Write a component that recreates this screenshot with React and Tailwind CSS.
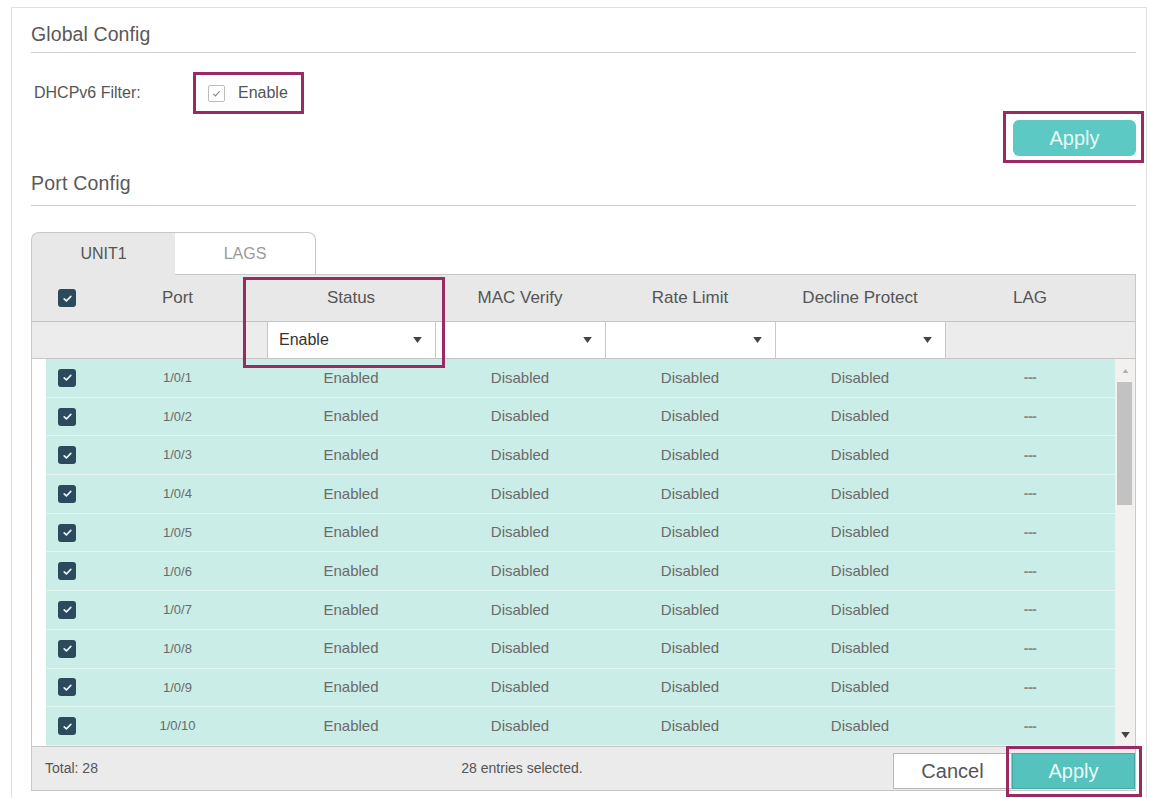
import React from 'react';

const ports = Array.from({ length: 10 }, (_, i) => `1/0/${i + 1}`);

// same column template for header, filter and body rows
const cols = 'grid grid-cols-[14px_42px_179px_168px_170px_170px_170px_170px_20px]';

const DarkCheck = () => (
  <span className="flex h-[18px] w-[18px] items-center justify-center rounded-[3px] bg-[#2c4a5c]">
    <svg viewBox="0 0 12 12" className="h-[11px] w-[11px]">
      <path d="M2.4 6.4l2.4 2.3 4.8-5.1" fill="none" stroke="#e4f3f8" strokeWidth="1.9" strokeLinecap="round" strokeLinejoin="round" />
    </svg>
  </span>
);

const Arrow = ({ className = '' }) => (
  <svg viewBox="0 0 10 7" className={`h-[6px] w-[9px] ${className}`}>
    <path d="M0 0h10L5 7z" fill="#444" />
  </svg>
);

const Select = ({ value }) => (
  <div className="flex h-full items-center justify-between border-l border-[#c8c8c8] bg-white pl-[11px] pr-[13px] text-[16px] text-[#333]">
    <span>{value}</span>
    <Arrow />
  </div>
);

const App = () => {
  return (
    <div className="h-[798px] w-[1151px] overflow-hidden bg-white pl-[11px] pt-[7px] font-['Liberation_Sans',Arial,sans-serif]">
      <div className="h-full w-[1136px] border-l border-r border-t border-[#e0e0e0]">
        <div className="ml-[19px] mr-[10px]">
          {/* Global Config */}
          <div className="pt-[15px] text-[19.5px] leading-[22px] tracking-[0.1px] text-[#595959]">Global Config</div>
          <div className="mt-[7px] border-b border-[#cfcfcf]" />

          <div className="mt-[19px] flex items-center">
            <div className="w-[162px] pl-[3px] text-[16px] text-[#555]">DHCPv6 Filter:</div>
            <div className="flex h-[42px] w-[111px] items-center border-[3px] border-[#9c2a62] pl-[12px]">
              <span className="flex h-[17px] w-[17px] items-center justify-center rounded-[2px] border border-[#bdbdbd] bg-white">
                <svg viewBox="0 0 12 12" className="h-[11px] w-[11px]">
                  <path d="M2.5 6.3l2.4 2.4 4.6-5.2" fill="none" stroke="#8a8a8a" strokeWidth="1.2" />
                </svg>
              </span>
              <span className="ml-[13px] text-[16px] text-[#555]">Enable</span>
            </div>
          </div>

          <div className="-mr-[8px] -mt-[3px] flex justify-end">
            <div className="h-[52px] w-[141px] border-[3px] border-[#9c2a62] pb-[4px] pl-[7px] pr-[5px] pt-[6px]">
              <button className="flex h-full w-full items-center justify-center rounded-[6px] bg-[#5dc9c4] text-[20px] text-[#e8faf9]">
                Apply
              </button>
            </div>
          </div>

          {/* Port Config */}
          <div className="mt-[9px] text-[19.5px] leading-[22px] tracking-[0.2px] text-[#595959]">Port Config</div>
          <div className="mt-[11px] border-b border-[#cfcfcf]" />

          <div className="mt-[26px] flex h-[43px] text-[16px]">
            <div className="flex w-[144px] items-center justify-center rounded-tl-[8px] border-l border-t border-[#c8c8c8] bg-[#e8e8e8] text-[#555]">
              UNIT1
            </div>
            <div className="flex w-[141px] items-center justify-center rounded-tr-[8px] border-b border-r border-t border-[#c8c8c8] bg-white text-[#9a9a9a]">
              LAGS
            </div>
            <div className="flex-1 border-b border-[#c8c8c8]" />
          </div>

          {/* table */}
          <div className="relative border-b border-l border-r border-[#c8c8c8]">
            <div className={`${cols} h-[47px] items-center border-b border-[#c4c4c4] bg-[#e8e8e8] text-[17px] text-[#555]`}>
              <span />
              <span className="flex justify-center">
                <DarkCheck />
              </span>
              <span className="text-center">Port</span>
              <span className="text-center">Status</span>
              <span className="text-center">MAC Verify</span>
              <span className="text-center">Rate Limit</span>
              <span className="text-center">Decline Protect</span>
              <span className="text-center">LAG</span>
              <span />
            </div>

            <div className={`${cols} h-[37px] border-b border-[#c4c4c4] bg-[#ececec]`}>
              <span className="col-span-3" />
              <Select value="Enable" />
              <Select value="" />
              <Select value="" />
              <Select value="" />
              <span className="col-span-2 border-l border-[#c8c8c8]" />
            </div>

            <div className="flex h-[387px] bg-white">
              <div className="flex-1 pl-[14px]">
                {ports.map((p) => (
                  <div
                    key={p}
                    className="grid h-[38.7px] grid-cols-[42px_179px_168px_170px_170px_170px_170px] items-center border-b border-[#e2f5f1] bg-[#cbede7] text-[15px] text-[#6a6a6a]"
                  >
                    <span className="flex justify-center">
                      <DarkCheck />
                    </span>
                    <span className="text-center text-[13px]">{p}</span>
                    <span className="text-center">Enabled</span>
                    <span className="text-center">Disabled</span>
                    <span className="text-center">Disabled</span>
                    <span className="text-center">Disabled</span>
                    <span className="text-center text-[14px] font-bold tracking-[-0.5px] text-[#8a8a8a]">---</span>
                  </div>
                ))}
              </div>
              {/* scrollbar */}
              <div className="flex w-[20px] flex-col bg-[#f3f0f0]">
                <div className="flex h-[23px] items-center justify-center">
                  <svg viewBox="0 0 10 7" className="h-[4px] w-[7px]">
                    <path d="M0 7h10L5 0z" fill="#b0b0b0" />
                  </svg>
                </div>
                <div className="ml-[2px] h-[123px] w-[15px] bg-[#c2c2c2]" />
                <div className="flex-1" />
                <div className="flex h-[14px] items-start justify-center">
                  <Arrow />
                </div>
              </div>
            </div>

            <div className="flex h-[44px] border-t border-[#c8c8c8] bg-[#ebebeb] text-[14px] text-[#555]">
              <div className="flex w-[380px] items-center pl-[13px]">Total: 28</div>
              <div className="flex w-[220px] items-center justify-center">28 entries selected.</div>
              <div className="flex-1" />
              <div className="flex items-end pb-px">
                <button className="h-[36px] w-[119px] border border-[#b8b8b8] bg-white text-[20px] text-[#555]">Cancel</button>
                <div className="relative">
                  <button className="h-[36px] w-[123px] border border-[#45a8a3] bg-[#55c2bd] text-[20px] text-[#eafbfa]">Apply</button>
                  <span className="absolute -bottom-[8px] -left-[6px] -right-[7px] -top-[7px] border-[3px] border-[#9c2a62]" />
                </div>
              </div>
            </div>

            {/* highlight over the Status column */}
            <span className="absolute left-[211px] top-[2px] h-[91px] w-[202px] border-[3px] border-[#9c2a62]" />
          </div>
        </div>
      </div>
    </div>
  );
};

export default App;
